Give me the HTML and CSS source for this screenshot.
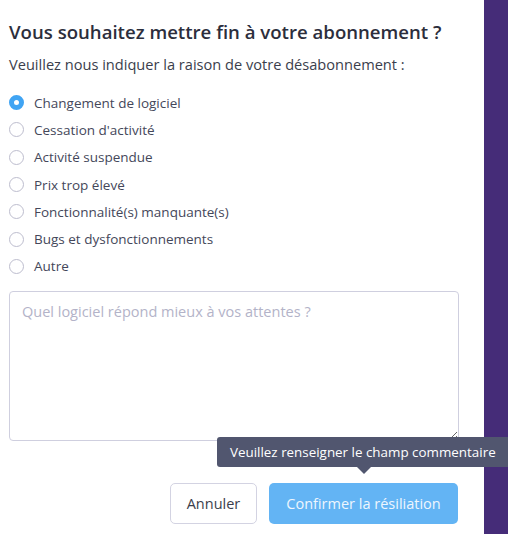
FILE: index.html
```html
<!DOCTYPE html>
<html lang="fr">
<head>
<meta charset="utf-8">
<link rel="stylesheet" href="styles.css">
</head>
<body>
<div class="page">
  <div class="modal">
    <h1 class="title">Vous souhaitez mettre fin à votre abonnement ?</h1>
    <p class="subtitle">Veuillez nous indiquer la raison de votre désabonnement :</p>
    <ul class="options">
      <li class="option"><span class="radio checked"></span><span>Changement de logiciel</span></li>
      <li class="option"><span class="radio"></span><span>Cessation d'activité</span></li>
      <li class="option"><span class="radio"></span><span>Activité suspendue</span></li>
      <li class="option"><span class="radio"></span><span>Prix trop élevé</span></li>
      <li class="option"><span class="radio"></span><span>Fonctionnalité(s) manquante(s)</span></li>
      <li class="option"><span class="radio"></span><span>Bugs et dysfonctionnements</span></li>
      <li class="option"><span class="radio"></span><span>Autre</span></li>
    </ul>
    <textarea class="comment" placeholder="Quel logiciel répond mieux à vos attentes ?"></textarea>
    <div class="actions">
      <button class="btn btn-cancel">Annuler</button>
      <div class="confirm-wrap">
        <button class="btn btn-confirm">Confirmer la résiliation</button>
        <div class="tooltip">Veuillez renseigner le champ commentaire</div>
      </div>
    </div>
  </div>
  <div class="side"></div>
</div>
</body>
</html>
```
FILE: styles.css
```css
* { box-sizing: border-box; }
html, body { margin: 0; padding: 0; }
body {
  font-family: "Open Sans", "Noto Sans", sans-serif;
  background: #ffffff;
  width: 508px;
  height: 534px;
  overflow: hidden;
}
.page {
  display: flex;
  height: 534px;
}
.modal {
  width: 484px;
  padding: 18px 0 0 9px;
  background: #fff;
}
.side {
  width: 24px;
  background: #452c78;
}
.title {
  margin: 0;
  font-size: 18.6px;
  font-weight: 600;
  color: #2c2e3c;
  line-height: 28px;
  white-space: nowrap;
}
.subtitle {
  margin: 7px 0 0;
  font-size: 14.6px;
  color: #3b3e4c;
  line-height: 22px;
}
.options {
  list-style: none;
  margin: 14px 0 0;
  padding: 0;
}
.option {
  display: flex;
  align-items: center;
  gap: 10px;
  height: 27.3px;
  font-size: 13.5px;
  color: #44475a;
}
.radio {
  width: 15px;
  height: 15px;
  border-radius: 50%;
  border: 1.5px solid #bdbdce;
  background: #fff;
  flex: none;
}
.radio.checked {
  border: 5px solid #40a4f3;
  background: #fff;
}
.comment {
  display: block;
  margin-top: 11px;
  width: 450px;
  height: 150px;
  border: 1px solid #cfcfdf;
  border-radius: 4px;
  padding: 10px 12px;
  font-family: inherit;
  font-size: 14.5px;
  color: #3b3e4c;
  resize: vertical;
}
.comment::placeholder { color: #b3b3c8; }
.actions {
  display: flex;
  justify-content: flex-end;
  gap: 12px;
  margin-top: 42px;
  width: 450px;
  padding-right: 1px;
}
.btn {
  font-family: inherit;
  font-size: 14.5px;
  height: 41px;
  border-radius: 5px;
  cursor: pointer;
}
.btn-cancel {
  width: 87px;
  background: #fff;
  border: 1px solid #d3d3e2;
  color: #3b3e4c;
}
.confirm-wrap { position: relative; }
.btn-confirm {
  width: 189px;
  background: #63b4f4;
  border: none;
  color: #eef6fe;
}
.tooltip {
  position: absolute;
  left: -52px;
  bottom: 57px;
  width: 300px;
  height: 30px;
  padding: 0 0 0 13px;
  line-height: 30px;
  background: #51566f;
  color: #fff;
  font-size: 13.4px;
  border-radius: 3px;
  white-space: nowrap;
}
.tooltip::after {
  content: "";
  position: absolute;
  left: 140px;
  top: 30px;
  border-left: 7px solid transparent;
  border-right: 7px solid transparent;
  border-top: 7px solid #51566f;
}
```
